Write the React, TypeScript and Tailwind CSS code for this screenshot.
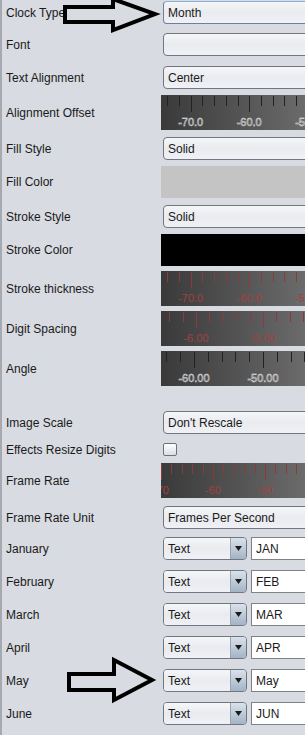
import { ReactNode } from "react";

type RulerProps = {
  origin: number; // x of the first label, from the ruler's left edge
  step: number; // gap between two minor ticks
  labels: string[];
  tone: "red" | "white";
};

// dark gradient ruler used by the numeric fields
const Ruler = ({ origin, step, labels, tone }: RulerProps) => {
  const ticks: { x: number; major: boolean }[] = [];
  for (let k = -15; k < 40; k++) {
    const x = origin + k * step;
    if (x < -2 || x > 152) continue;
    ticks.push({ x: Math.round(x) + 0.5, major: k % 5 === 0 });
  }
  const tickColor = tone === "red" ? "#8a3c3c" : "#222222";

  return (
    <div className="h-[35px] w-[150px] shrink-0 overflow-hidden bg-gradient-to-r from-[#3a3a3a] to-[#6d6d6d]">
      <svg width="150" height="35">
        {ticks.map((t, i) => (
          <line
            key={i}
            x1={t.x}
            x2={t.x}
            y1={1}
            y2={t.major ? 17 : 11}
            stroke={tickColor}
            strokeWidth={1}
          />
        ))}
        {labels.map((text, i) => (
          <text
            key={text}
            x={origin + i * 5 * step}
            y={31}
            textAnchor="middle"
            fontSize={11}
            fontFamily="'Liberation Sans', Arial, sans-serif"
            fill={tone === "red" ? "#a04242" : "#464646"}
            stroke={tone === "red" ? "none" : "#e6e6e6"}
            strokeWidth={tone === "red" ? 0 : 0.5}
          >
            {text}
          </text>
        ))}
      </svg>
    </div>
  );
};

const Row = ({
  label,
  className,
  children,
}: {
  label: string;
  className: string;
  children: ReactNode;
}) => (
  <div className={`flex items-center ${className}`}>
    <div className="w-[159px] shrink-0 pl-[4px] leading-[14px]">{label}</div>
    <div className="flex min-w-0 flex-1 items-center">{children}</div>
  </div>
);

const Combo = ({ text, focused }: { text: string; focused?: boolean }) => (
  <div
    className={`ml-[2px] flex h-[23px] w-[170px] shrink-0 items-center rounded-[4px] border bg-gradient-to-b from-[#f5f6f8] via-[#e9ebef] to-[#eff1f6] pl-[4px] ${
      focused ? "border-[#6f7f96] border-t-[#8eaed8]" : "border-[#73767c]"
    }`}
  >
    {text}
  </div>
);

const MonthField = ({ value }: { value: string }) => (
  <>
    <div className="ml-[2px] flex h-[23px] w-[84px] shrink-0 overflow-hidden rounded-[4px] border border-[#73767c]">
      <div className="flex flex-1 items-center bg-gradient-to-b from-[#f5f6f8] via-[#e9ebef] to-[#eff1f6] pl-[4px]">
        Text
      </div>
      <div className="flex w-[16px] items-center justify-center border-l border-[#9aa5b2] bg-gradient-to-b from-[#dae2eb] to-[#a3b4c6]">
        <svg width="7" height="5" viewBox="0 0 7 5">
          <path d="M0 0h7L3.5 5z" fill="#1c1c1c" />
        </svg>
      </div>
    </div>
    <div className="ml-[4px] flex h-[23px] w-[80px] shrink-0 items-center border border-[#7f8288] bg-white pl-[4px]">
      {value}
    </div>
  </>
);

const App = () => {
  const months = [
    ["January", "JAN", "mt-[8px]"],
    ["February", "FEB", "mt-[10px]"],
    ["March", "MAR", "mt-[10px]"],
    ["April", "APR", "mt-[10px]"],
    ["May", "May", "mt-[10px]"],
    ["June", "JUN", "mt-[10px]"],
    ["July", "JUL", "mt-[10px]"],
  ];

  return (
    <div className="relative h-[735px] w-[305px] overflow-hidden border-l-2 border-[#a6a9af] bg-[#d8dbe1] font-['Liberation_Sans',Arial,sans-serif] text-[12px] text-[#1a1a1a]">
      <div className="flex flex-col">
        <Row label="Clock Type" className="mt-[1px]">
          <Combo text="Month" focused />
        </Row>
        <Row label="Font" className="mt-[9px]">
          <Combo text="" />
        </Row>
        <Row label="Text Alignment" className="mt-[10px]">
          <Combo text="Center" />
        </Row>
        <Row label="Alignment Offset" className="mt-[6px]">
          <Ruler origin={29.7} step={11.7} labels={["-70.0", "-60.0", "-50.0"]} tone="white" />
        </Row>
        <Row label="Fill Style" className="mt-[7px]">
          <Combo text="Solid" />
        </Row>
        <Row label="Fill Color" className="mt-[6px]">
          <div className="h-[32px] w-[150px] shrink-0 bg-[#c4c4c4]" />
        </Row>
        <Row label="Stroke Style" className="mt-[7px]">
          <Combo text="Solid" />
        </Row>
        <Row label="Stroke Color" className="mt-[6px]">
          <div className="h-[32px] w-[150px] shrink-0 bg-black" />
        </Row>
        <Row label="Stroke thickness" className="mt-[5px]">
          <Ruler origin={29.7} step={11.7} labels={["-70.0", "-60.0", "-50.0"]} tone="red" />
        </Row>
        <Row label="Digit Spacing" className="mt-[5px]">
          <Ruler origin={35} step={13.4} labels={["-6.00", "-5.00", "-4.00"]} tone="red" />
        </Row>
        <Row label="Angle" className="mt-[5px]">
          <Ruler origin={33} step={13.8} labels={["-60.00", "-50.00", "-40.00"]} tone="white" />
        </Row>
        <Row label="Image Scale" className="mt-[25px]">
          <Combo text="Don't Rescale" />
        </Row>
        <Row label="Effects Resize Digits" className="mt-[9px] h-[13px]">
          <div className="ml-[2px] h-[13px] w-[14px] shrink-0 rounded-[2px] border border-[#6e7176] bg-gradient-to-b from-white to-[#dcdee3]" />
        </Row>
        <Row label="Frame Rate" className="mt-[7px]">
          <Ruler origin={0} step={10.4} labels={["-70", "-60", "-50", "-40"]} tone="red" />
        </Row>
        <Row label="Frame Rate Unit" className="mt-[8px]">
          <Combo text="Frames Per Second" />
        </Row>
        {months.map(([label, value, mt]) => (
          <Row key={label} label={label} className={mt}>
            <MonthField value={value} />
          </Row>
        ))}
      </div>

      {/* annotation arrows drawn over the form */}
      <svg
        className="pointer-events-none absolute left-[-2px] top-0"
        width="305"
        height="735"
      >
        <polygon
          points="65,7 113,7 113,-1 155,14 113,30 113,22 65,22"
          fill="none"
          stroke="#000"
          strokeWidth={4}
        />
        <polygon
          points="69,674 114,674 114,660 152,680 114,700 114,690 69,690"
          fill="none"
          stroke="#000"
          strokeWidth={4}
        />
      </svg>
    </div>
  );
};

export default App;
